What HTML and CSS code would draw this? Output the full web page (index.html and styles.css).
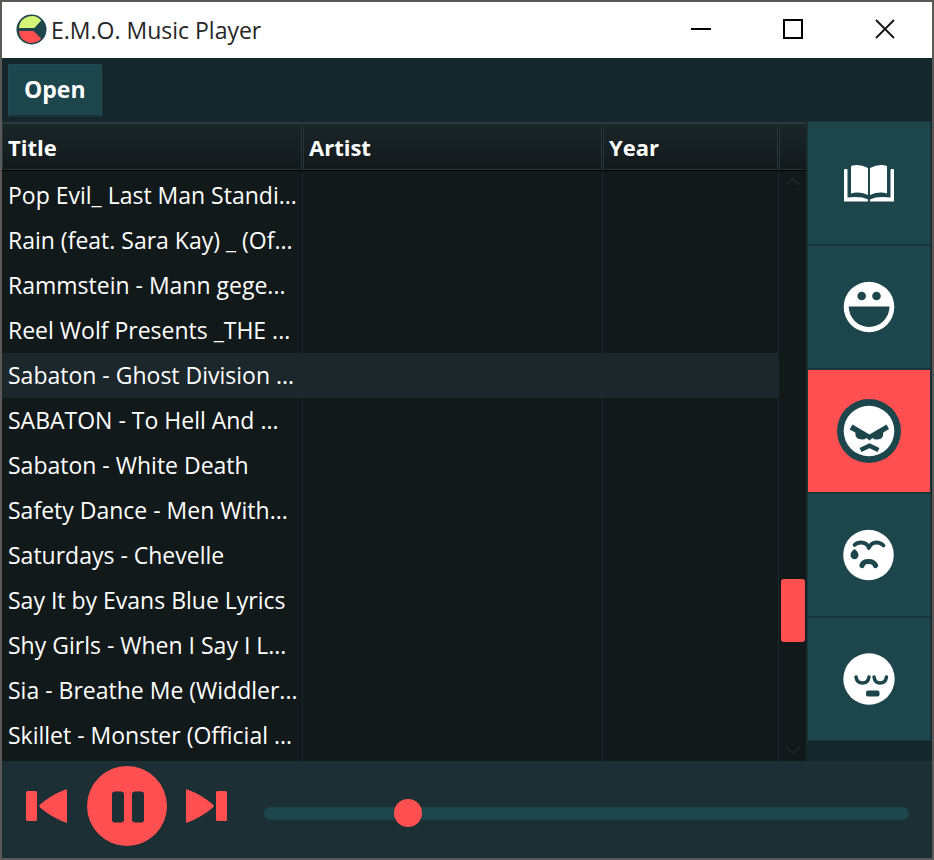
FILE: index.html
```html
<!DOCTYPE html>
<html lang="en">
<head>
<meta charset="utf-8">
<title>E.M.O. Music Player</title>
<link rel="stylesheet" href="styles.css">
</head>
<body>
<div class="window">
  <header class="titlebar">
    <svg class="logo" viewBox="0 0 32 32" aria-hidden="true">
      <circle cx="16" cy="16" r="15.500" fill="#1c454c"/>
      <path d="M3 14.500A13.200 13.200 0 0 1 26 6.600L19 14.500Z" fill="#d4f577"/>
      <path d="M3 17.500A13.200 13.200 0 0 0 26 25.400L18 17.500Z" fill="#ff4f51"/>
    </svg>
    <h1 class="caption">E.M.O. Music Player</h1>
    <div class="window-buttons">
      <button type="button" aria-label="Minimize"><svg viewBox="0 0 22 22"><path d="M1 11H21" stroke="#000" stroke-width="2"/></svg></button>
      <button type="button" aria-label="Maximize"><svg viewBox="0 0 22 22"><rect x="2" y="2" width="18" height="18" fill="none" stroke="#000" stroke-width="2"/></svg></button>
      <button type="button" aria-label="Close"><svg viewBox="0 0 22 22"><path d="M2 2L20 20M20 2L2 20" stroke="#111" stroke-width="1.800"/></svg></button>
    </div>
  </header>

  <div class="toolbar"><button type="button" class="open">Open</button></div>

  <main class="content">
    <section class="library">
      <table class="tracks">
        <colgroup><col class="col-title"><col class="col-artist"><col class="col-year"></colgroup>
        <thead><tr><th>Title</th><th>Artist</th><th>Year</th></tr></thead>
        <tbody>
          <tr><td>Pop Evil_ Last Man Standi...</td><td></td><td></td></tr>
          <tr><td>Rain (feat. Sara Kay) _ (Of...</td><td></td><td></td></tr>
          <tr><td>Rammstein - Mann gege...</td><td></td><td></td></tr>
          <tr><td>Reel Wolf Presents _THE ...</td><td></td><td></td></tr>
          <tr class="selected"><td>Sabaton - Ghost Division ...</td><td></td><td></td></tr>
          <tr><td>SABATON - To Hell And ...</td><td></td><td></td></tr>
          <tr><td>Sabaton - White Death</td><td></td><td></td></tr>
          <tr><td>Safety Dance - Men With...</td><td></td><td></td></tr>
          <tr><td>Saturdays - Chevelle</td><td></td><td></td></tr>
          <tr><td>Say It by Evans Blue Lyrics</td><td></td><td></td></tr>
          <tr><td>Shy Girls - When I Say I L...</td><td></td><td></td></tr>
          <tr><td>Sia - Breathe Me (Widdler...</td><td></td><td></td></tr>
          <tr><td>Skillet - Monster (Official ...</td><td></td><td></td></tr>
          <tr class="filler"><td></td><td></td><td></td></tr>
        </tbody>
      </table>
      <div class="gutter">
        <div class="gutter-head"></div>
        <div class="scrollbar">
          <button type="button" class="arrow" aria-label="Scroll up"><svg viewBox="0 0 16 10"><path d="M1 8L8 2L15 8" fill="none" stroke="#1e2628" stroke-width="2"/></svg></button>
          <div class="track-before"></div>
          <div class="thumb"></div>
          <div class="track-after"></div>
          <button type="button" class="arrow" aria-label="Scroll down"><svg viewBox="0 0 16 10"><path d="M1 2L8 8L15 2" fill="none" stroke="#1e2628" stroke-width="2"/></svg></button>
        </div>
      </div>
    </section>

    <nav class="moods" aria-label="Moods">
      <button type="button" aria-label="Library">
        <svg viewBox="0 0 64 64" fill="#fff">
          <path d="M14 15Q22 12.500 31 17V44Q22 40 14 42.500Z"/>
          <path d="M50 15Q42 12.500 33 17V44Q42 40 50 42.500Z"/>
          <path d="M8 18h1.500q1 0 1 1V46.500Q24 45 31 48.500V50.500H7V19q0-1 1-1Z"/>
          <path d="M56 18h-1.500q-1 0-1 1V46.500Q40 45 33 48.500V50.500H57V19q0-1-1-1Z"/>
        </svg>
      </button>
      <button type="button" aria-label="Happy">
        <svg viewBox="0 0 64 64">
          <circle cx="32" cy="32" r="25.300" fill="#fff"/>
          <g fill="#1c454c"><circle cx="24.700" cy="21" r="4.300"/><circle cx="39.500" cy="21" r="4.300"/>
          <path d="M11.700 31.500H52.500A20.400 20.400 0 0 1 11.700 31.500Z"/></g>
        </svg>
      </button>
      <button type="button" class="active" aria-label="Angry" aria-pressed="true">
        <svg viewBox="0 0 64 64">
          <circle cx="32" cy="32" r="32" fill="#1c454c"/><circle cx="32" cy="32" r="25.300" fill="#fff"/>
          <path d="M15.500 25.500L32.500 35.500L49.500 25.500L52 30L46.300 33.500Q46.500 41 39.500 40.500Q37 40.500 35.500 39L32.500 41.500L29.500 39Q28 40.500 25 40.500Q18 40.500 18.300 33.500L12.500 30.500Z" fill="#1c454c"/>
          <path d="M23.500 51L32.500 46.700L41.500 51" fill="none" stroke="#1c454c" stroke-width="4.600"/>
        </svg>
      </button>
      <button type="button" aria-label="Sad">
        <svg viewBox="0 0 64 64">
          <circle cx="31.500" cy="32" r="25.300" fill="#fff"/>
          <path d="M17.500 22Q20 19.500 24 19.500Q30 19.500 31.800 25Q34 19.500 39.500 19.500Q43.500 19.500 46.500 22.500" fill="none" stroke="#1c454c" stroke-width="3.800" stroke-linecap="round" stroke-linejoin="round"/>
          <path d="M17.500 26Q21.500 29 21.500 32A4 4.300 0 0 1 13.500 32Q13.500 29 17.500 26Z" fill="#1c454c"/>
          <path d="M25 42.500Q26 38.500 31.500 38.500Q37 38.500 38.500 42.500" fill="none" stroke="#1c454c" stroke-width="5.200" stroke-linecap="round"/>
        </svg>
      </button>
      <button type="button" aria-label="Calm">
        <svg viewBox="0 0 64 64">
          <circle cx="32" cy="32" r="25.700" fill="#fff"/>
          <path d="M19 30Q20 36 25.500 36Q31 36 32 30M37 30Q38 36 43 36Q48.500 36 49.500 30" fill="none" stroke="#1c454c" stroke-width="3.500" stroke-linecap="round"/>
          <rect x="29" y="43.500" width="13.500" height="6" rx="2" fill="#1c454c"/>
        </svg>
      </button>
    </nav>
  </main>

  <footer class="player">
    <div class="controls">
      <button type="button" class="skip" aria-label="Previous"><svg viewBox="0 0 42 36" fill="#ff4f51"><rect x="0" y="3" width="11" height="30" rx="1.500"/><path d="M41 2V34Q41 35 39.500 34.500Q25 29 14 19.500Q12.500 18 14 16.500Q25 7 39.500 1.500Q41 1 41 2Z"/></svg></button>
      <button type="button" class="pause" aria-label="Pause"><svg viewBox="0 0 80 80"><circle cx="40" cy="40" r="40" fill="#ff4f51"/><rect x="25" y="25.500" width="12" height="31" rx="3" fill="#1c2f34"/><rect x="45" y="25.500" width="12" height="31" rx="3" fill="#1c2f34"/></svg></button>
      <button type="button" class="skip" aria-label="Next"><svg viewBox="0 0 42 36" fill="#ff4f51"><rect x="30" y="3" width="11" height="30" rx="1.500"/><path d="M0 2V34Q0 35 1.500 34.500Q16 29 27 19.500Q28.500 18 27 16.500Q16 7 1.500 1.500Q0 1 0 2Z"/></svg></button>
    </div>
    <input class="seek" type="range" min="0" max="1000" value="210" aria-label="Position">
  </footer>
</div>
</body>
</html>
```
FILE: styles.css
```css
* { box-sizing: border-box; }

body {
  margin: 0;
  font-family: "Segoe UI", "Open Sans", "Noto Sans", sans-serif;
  font-size: 23px;
  color: #fff;
}

button {
  margin: 0;
  padding: 0;
  border: 0;
  background: none;
  color: inherit;
  font: inherit;
}

svg { display: block; }

.window {
  display: flex;
  flex-direction: column;
  min-height: 100vh;
  border: 2px solid #5b5858;
  background: #16272b;
}

.titlebar {
  display: flex;
  align-items: center;
  height: 56px;
  padding: 0 1px 2px 14px;
  background: #fff;
  color: #262626;
}

.logo { width: 31px; height: 31px; }

.caption {
  margin: 2px 0 0 4px;
  font-size: 23px;
  font-weight: 400;
}

.window-buttons { display: flex; margin-left: auto; }

.window-buttons button {
  display: grid;
  place-items: center;
  width: 92px;
  height: 54px;
}

.window-buttons svg { width: 22px; height: 22px; }

.toolbar { padding: 6px 6px 5px; }

.open {
  display: block;
  height: 53px;
  padding: 0 15px 2px;
  border: 1px solid #1e4d54;
  border-bottom: 2px solid #163238;
  background: #1c454c;
  font-weight: 700;
}

.content { display: flex; flex: 1; }

.library {
  display: flex;
  flex: 1;
  min-width: 0;
  background: #12191b;
}

.tracks {
  flex: 1;
  min-width: 0;
  border-collapse: separate;
  border-spacing: 0;
  table-layout: fixed;
}

.col-title { width: 301px; }

.col-artist { width: 300px; }

.tracks th, .gutter-head {
  height: 49px;
  border-top: 2px solid #2a3b3e;
  border-right: 1px solid #12191b;
  border-bottom: 1px solid #000;
  background: linear-gradient(#1b2629, #12191b);
  box-shadow: inset 1px 0 #263639, inset -1px -1px #263639;
}

.tracks th {
  padding: 0 6px;
  font-size: 22px;
  font-weight: 700;
  text-align: left;
}

/* Small gap between the header and the first track. */
.tracks tbody::before {
  content: "";
  display: table-row;
  height: 2px;
}

.tracks td {
  height: 45px;
  padding: 2px 0 3px 6px;
  border-right: 1px solid #1a282b;
  line-height: 40px;
  white-space: nowrap;
  overflow: hidden;
}

.tracks .selected td { background: #1c272c; }

.tracks .filler td { height: auto; padding: 0; }

.gutter {
  display: flex;
  flex-direction: column;
  width: 27px;
}

.gutter-head {
  border-right: 0;
  box-shadow: inset 1px -1px #263639;
}

.scrollbar {
  display: flex;
  flex: 1;
  flex-direction: column;
  align-items: center;
}

.arrow {
  display: grid;
  place-items: center;
  width: 24px;
  height: 22px;
}

.arrow svg { width: 16px; height: 10px; }

.track-before { flex: 386; }

.thumb {
  width: 24px;
  height: 63px;
  border-radius: 3px;
  background: #ff4f51;
}

.track-after { flex: 97; }

.moods {
  display: flex;
  flex-direction: column;
  width: 126px;
  margin-top: -1px;
  padding: 0 1px 20px;
}

.moods button {
  display: grid;
  place-items: center;
  height: 124px;
  border: 1px solid #19363b;
  background: #1c454c;
}

.moods .active { background: #ff4f51; }

.moods svg { width: 64px; height: 64px; }

.player {
  display: flex;
  align-items: center;
  height: 97px;
  padding: 0 23px 8px 24px;
  background: #1c2f34;
}

.controls { display: flex; align-items: center; gap: 19px; }

.skip svg { width: 42px; height: 36px; }

.pause svg { width: 80px; height: 80px; }

.seek {
  flex: 1;
  min-width: 0;
  height: 28px;
  margin: 16px 0 0 36px;
  appearance: none;
  background: none;
}

.seek::-webkit-slider-runnable-track {
  height: 13px;
  border-radius: 7px;
  background: #1c454c;
}

.seek::-webkit-slider-thumb {
  appearance: none;
  width: 28px;
  height: 28px;
  margin-top: -8px;
  border-radius: 50%;
  background: #ff4f51;
}
```
